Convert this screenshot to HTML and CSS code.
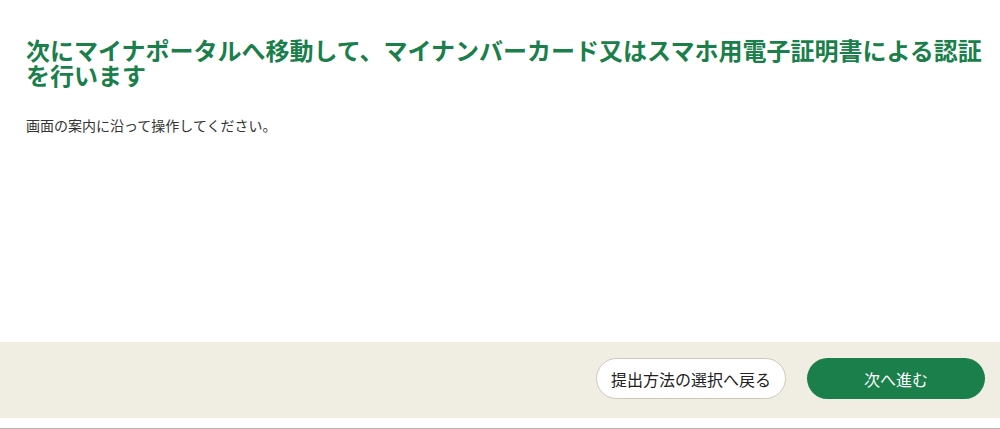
FILE: index.html
```html
<!DOCTYPE html>
<html lang="ja">
<head>
  <meta charset="UTF-8">
  <meta name="viewport" content="width=device-width, initial-scale=1">
  <title>マイナポータルへ移動</title>
  <link rel="stylesheet" href="styles.css">
</head>
<body>

<div class="page">
  <div class="content">
    <h1 class="title">次にマイナポータルへ移動して、マイナンバーカード又はスマホ用電子証明書による認証を行います</h1>
    <p class="lead">画面の案内に沿って操作してください。</p>
  </div>

  <div class="actions">
    <button class="btn btn-back">提出方法の選択へ戻る</button>
    <button class="btn btn-next">次へ進む</button>
  </div>

  <div class="bottom-line"></div>
</div>

</body>
</html>
```

FILE: styles.css
```css
body {
  margin: 0;
  font-family: "Noto Sans CJK JP", "Noto Sans", sans-serif;
  color: #333;
  background: #fff;
}
.page { height: 429px; display: flex; flex-direction: column; }
.content { flex: 1; padding: 37px 15px 0 26px; }
.title {
  margin: 0;
  font-size: 24px;
  line-height: 25px;
  font-weight: bold;
  color: #1a7f4b;
}
.lead {
  margin: 28px 0 0;
  font-size: 14px;
  line-height: 20px;
  color: #333;
}
.actions {
  height: 76px;
  box-sizing: border-box;
  background: #f0ede2;
  display: flex;
  justify-content: flex-end;
  align-items: flex-start;
  gap: 21px;
  padding: 16px 15px 0 26px;
  margin-bottom: 10px;
}
.btn {
  height: 41px;
  border-radius: 21px;
  font-family: inherit;
  font-size: 16px;
  cursor: pointer;
}
.btn-back {
  width: 190px;
  background: #fff;
  border: 1px solid #cfc8bd;
  color: #222;
}
.btn-next {
  width: 178px;
  background: #1a7f4b;
  border: none;
  color: #fff;
}
.bottom-line { height: 1px; background: #bdb5ad; }
```
